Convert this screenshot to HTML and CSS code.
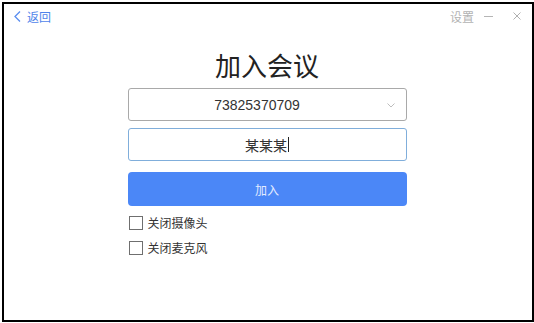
FILE: index.html
```html
<!DOCTYPE html>
<html lang="zh-CN">
<head>
<meta charset="utf-8">
<title>加入会议</title>
<link rel="stylesheet" href="styles.css">
</head>
<body>
<div class="window">
  <div class="titlebar">
    <a class="back">
      <svg class="back-icon" width="7" height="11" viewBox="0 0 7 11"><path d="M6 0.5 L1 5.5 L6 10.5" fill="none" stroke="#5b8ef0" stroke-width="1.3"/></svg>
      <span>返回</span>
    </a>
    <div class="controls">
      <span class="settings">设置</span>
      <svg class="min" width="9" height="9" viewBox="0 0 9 9"><path d="M0 4.5 H9" stroke="#b5b5b5" stroke-width="1"/></svg>
      <svg class="close" width="8" height="8" viewBox="0 0 8 8"><path d="M0.5 0.5 L7.5 7.5 M7.5 0.5 L0.5 7.5" stroke="#b0b0b0" stroke-width="1"/></svg>
    </div>
  </div>
  <div class="main">
    <h1 class="title">加入会议</h1>
    <div class="field select">
      <span class="value">73825370709</span>
      <svg class="chev" width="8" height="5" viewBox="0 0 8 5"><path d="M0.5 0.5 L4 4 L7.5 0.5" fill="none" stroke="#bdbdbd" stroke-width="1"/></svg>
    </div>
    <div class="field name">
      <span class="value">某某某</span><span class="caret"></span>
    </div>
    <button class="join">加入</button>
    <label class="check"><span class="box"></span><span>关闭摄像头</span></label>
    <label class="check"><span class="box"></span><span>关闭麦克风</span></label>
  </div>
</div>
</body>
</html>
```
FILE: styles.css
```css
html, body {
  margin: 0;
  padding: 0;
  background: #fff;
}
body {
  font-family: "Liberation Sans", "Noto Sans CJK SC", sans-serif;
  color: #333;
}
.window {
  box-sizing: border-box;
  margin: 2px 0 0 2px;
  width: 532px;
  height: 320px;
  border: 2px solid #000;
  display: flex;
  flex-direction: column;
}
.titlebar {
  height: 24px;
  display: flex;
  align-items: center;
  justify-content: space-between;
  padding: 0 11px 0 10px;
  font-size: 12px;
}
.back {
  display: flex;
  align-items: center;
  gap: 6px;
  color: #4f84ea;
}
.controls {
  display: flex;
  align-items: center;
}
.settings {
  color: #b3b3b3;
  margin-right: 10px;
}
.min {
  margin-right: 20px;
}
.main {
  width: 279px;
  margin: 0 auto;
  display: flex;
  flex-direction: column;
  transform: translateX(-1px);
}
.title {
  margin: 20px 0 1px 0;
  height: 39px;
  line-height: 39px;
  font-size: 26px;
  font-weight: normal;
  text-align: center;
  color: #222;
}
.field {
  box-sizing: border-box;
  height: 33px;
  border-radius: 3px;
  display: flex;
  align-items: center;
  justify-content: center;
  position: relative;
  font-size: 14px;
  color: #333;
}
.select {
  border: 1px solid #a9a9a9;
  padding-right: 20px;
}
.chev {
  position: absolute;
  right: 11px;
  top: 14px;
}
.name {
  margin-top: 7px;
  border: 1px solid #80aedb;
}
.caret {
  display: inline-block;
  width: 1px;
  height: 15px;
  background: #222;
  margin-left: 1px;
}
.join {
  margin-top: 11px;
  height: 34px;
  border: none;
  border-radius: 4px;
  background: #4b87f7;
  color: #e4ecff;
  font-family: "Liberation Sans", "Noto Sans CJK SC", sans-serif;
  font-size: 12px;
  padding: 0;
}
.check {
  display: flex;
  align-items: center;
  height: 25px;
  font-size: 12px;
  color: #333;
  padding-left: 1px;
}
.check:first-of-type {
  margin-top: 4px;
}
.box {
  box-sizing: border-box;
  width: 14px;
  height: 14px;
  border: 1px solid #6f6f6f;
  background: #fff;
  margin-right: 5px;
}
```
